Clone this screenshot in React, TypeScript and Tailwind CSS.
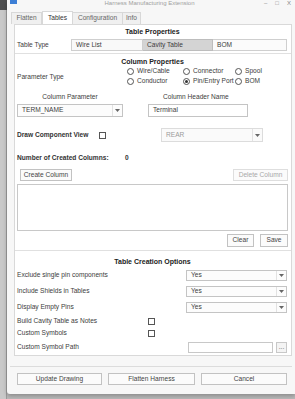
import React from "react";

const Arrow = () => (
    <svg width="5" height="3" viewBox="0 0 5 3"><path d="M0 0h5L2.5 3z" fill="#666" /></svg>
);

function Select(props: { value: string, className: string, disabled?: boolean }) {
    return <div className={`flex border ${props.disabled ? 'border-[#dcdcdc] text-[#9a9a9a] bg-[#fafafa]' : 'border-[#c4c4c4] bg-[#fcfcfc]'} ${props.className}`}>
        <div className="flex-1 flex items-center pl-[4px]">{props.value}</div>
        <div className="w-[10px] flex items-center justify-center border-l border-[#e2e2e2]"><Arrow /></div>
    </div>
}

function Radio(props: { label: string, checked?: boolean, className?: string }) {
    return <div className={`flex items-center gap-[3px] whitespace-nowrap ${props.className ?? ''}`}>
        <div className="w-[7px] h-[7px] rounded-full border border-[#555] bg-white flex items-center justify-center shrink-0">
            {props.checked ? <div className="w-[3px] h-[3px] rounded-full bg-[#333]" /> : null}
        </div>
        <span>{props.label}</span>
    </div>
}

const Check = () => <div className="w-[7px] h-[7px] border border-[#555] bg-white shrink-0" />;

function Btn(props: { label: string, className: string, disabled?: boolean }) {
    return <div className={`flex items-center justify-center border ${props.disabled ? 'border-[#dedede] text-[#a8a8a8]' : 'border-[#c2c2c2] text-[#444]'} bg-[#fbfbfb] ${props.className}`}>
        {props.label}
    </div>
}

export default function App() {
    return <div className="w-[295px] h-[399px] flex bg-[#b9b9b9] text-[6.6px] text-[#3c3c3c] font-['Liberation_Sans',Arial,sans-serif] leading-none overflow-hidden">
        {/* desktop behind the window */}
        <div className="w-[7px] flex flex-col shrink-0">
            <div className="h-[10px] bg-[#4f4f4f]" />
            <div className="flex-1 bg-[#c9c9c9] border-r border-[#9c9c9c]" />
        </div>

        <div className="flex-1 h-[394px] bg-[#f7f7f7] rounded-bl-[3px] shadow-[0_2px_4px_rgba(0,0,0,0.25)] flex flex-col">
            {/* title bar */}
            <div className="h-[12px] flex items-start text-[#a0a0a0] text-[6px]">
                <div className="w-[7px] h-[4px] ml-[3px] bg-[#3d7fd6]" />
                <div className="flex-1 text-center pl-[18px]">Harness Manufacturing Extension</div>
                <div className="flex items-start gap-[8px] pr-[4px] text-[#888]">
                    <span>–</span><span>□</span><span>X</span>
                </div>
            </div>

            {/* tabs */}
            <div className="h-[12px] flex pl-[4px] text-[#666]">
                <div className="w-[31px] flex items-center justify-center border border-b-0 border-[#d8d8d8] bg-[#f0f0f0]">Flatten</div>
                <div className="w-[31px] -mt-[1px] flex items-center justify-center border border-b-0 border-[#d8d8d8] bg-white text-[#333]">Tables</div>
                <div className="w-[50px] flex items-center justify-center border border-b-0 border-l-0 border-[#d8d8d8] bg-[#f0f0f0]">Configuration</div>
                <div className="w-[18px] flex items-center justify-center border border-b-0 border-l-0 border-[#d8d8d8] bg-[#f0f0f0]">Info</div>
            </div>

            {/* tab page */}
            <div className="h-[332px] ml-[7px] w-[278px] border border-[#d9d9d9] bg-white flex flex-col pl-[2px] pr-[3px]">
                <div className="h-[12px] flex items-center justify-center font-bold text-[7px] text-[#222]">Table Properties</div>
                <div className="h-[12px] mt-[2px] flex items-center">
                    <div className="w-[54px]">Table Type</div>
                    <div className="w-[72px] h-full flex items-center pl-[4px] border border-[#cfcfcf] bg-[#f9f9f9]">Wire List</div>
                    <div className="w-[70px] h-full flex items-center pl-[4px] border border-l-0 border-[#bdbdbd] bg-[#d4d4d4]">Cavity Table</div>
                    <div className="w-[74px] h-full flex items-center pl-[4px] border border-l-0 border-[#cfcfcf] bg-[#fbfbfb]">BOM</div>
                </div>

                <div className="mt-[2px] -ml-[2px] -mr-[3px] border-t border-[#e0e0e0]" />

                <div className="h-[10px] mt-[2px] flex items-center justify-center font-bold text-[7px] text-[#222]">Column Properties</div>
                <div className="flex">
                    <div className="w-[110px] pt-[8px]">Parameter Type</div>
                    <div className="flex flex-col">
                        <div className="h-[10px] flex items-center">
                            <Radio label="Wire/Cable" className="w-[56px]" />
                            <Radio label="Connector" className="w-[52px]" />
                            <Radio label="Spool" />
                        </div>
                        <div className="h-[10px] flex items-center">
                            <Radio label="Conductor" className="w-[56px]" />
                            <Radio label="Pin/Entry Port" checked className="w-[52px]" />
                            <Radio label="BOM" />
                        </div>
                    </div>
                </div>

                <div className="h-[10px] mt-[6px] flex items-center">
                    <div className="w-[106px] text-center">Column Parameter</div>
                    <div className="ml-[40px]">Column Header Name</div>
                </div>
                <div className="h-[13px] mt-[2px] flex">
                    <Select value="TERM_NAME" className="w-[106px]" />
                    <div className="w-[100px] ml-[25px] flex items-center pl-[4px] border border-[#c4c4c4]">Terminal</div>
                </div>

                <div className="h-[14px] mt-[11px] flex items-center">
                    <div className="w-[82px] font-bold text-[#333]">Draw Component View</div>
                    <Check />
                    <Select value="REAR" disabled className="w-[102px] h-full ml-[55px]" />
                </div>

                <div className="h-[10px] mt-[11px] flex items-center font-bold text-[#333]">
                    <span className="w-[108px]">Number of Created Columns:</span>
                    <span>0</span>
                </div>

                <div className="h-[12px] mt-[6px] flex justify-between">
                    <Btn label="Create Column" className="w-[52px] ml-[3px]" />
                    <Btn label="Delete Column" disabled className="w-[55px]" />
                </div>

                <div className="h-[47px] mt-[3px] border border-[#c8c8c8] bg-white" />

                <div className="h-[13px] mt-[3px] flex justify-end gap-[6px]">
                    <Btn label="Clear" className="w-[27px]" />
                    <Btn label="Save" className="w-[28px]" />
                </div>

                <div className="mt-[3px] -ml-[2px] -mr-[3px] border-t border-[#e0e0e0]" />

                <div className="h-[10px] mt-[5px] flex items-center justify-center font-bold text-[7px] text-[#222]">Table Creation Options</div>

                <div className="h-[11px] mt-[4px] flex items-center">
                    <div className="w-[169px]">Exclude single pin components</div>
                    <Select value="Yes" className="w-[101px] h-full" />
                </div>
                <div className="h-[11px] mt-[5px] flex items-center">
                    <div className="w-[169px]">Include Shields in Tables</div>
                    <Select value="Yes" className="w-[101px] h-full" />
                </div>
                <div className="h-[11px] mt-[5px] flex items-center">
                    <div className="w-[169px]">Display Empty Pins</div>
                    <Select value="Yes" className="w-[101px] h-full" />
                </div>
                <div className="h-[10px] mt-[3px] flex items-center">
                    <div className="w-[131px]">Build Cavity Table as Notes</div>
                    <Check />
                </div>
                <div className="h-[10px] mt-[2px] flex items-center">
                    <div className="w-[131px]">Custom Symbols</div>
                    <Check />
                </div>
                <div className="h-[11px] mt-[4px] flex items-center">
                    <div className="w-[171px]">Custom Symbol Path</div>
                    <div className="w-[85px] h-full border border-[#c8c8c8]" />
                    <div className="w-[11px] h-full ml-[3px] border border-[#c8c8c8] bg-[#f4f4f4] flex items-center justify-center text-[#666]">...</div>
                </div>
            </div>

            <div className="mt-[10px] mx-[3px] border-t border-[#dcdcdc]" />

            <div className="h-[12px] mt-[6px] flex pl-[10px] gap-[6px]">
                <Btn label="Update Drawing" className="w-[85px]" />
                <Btn label="Flatten Harness" className="w-[87px]" />
                <Btn label="Cancel" className="w-[86px]" />
            </div>
        </div>
    </div>
}
